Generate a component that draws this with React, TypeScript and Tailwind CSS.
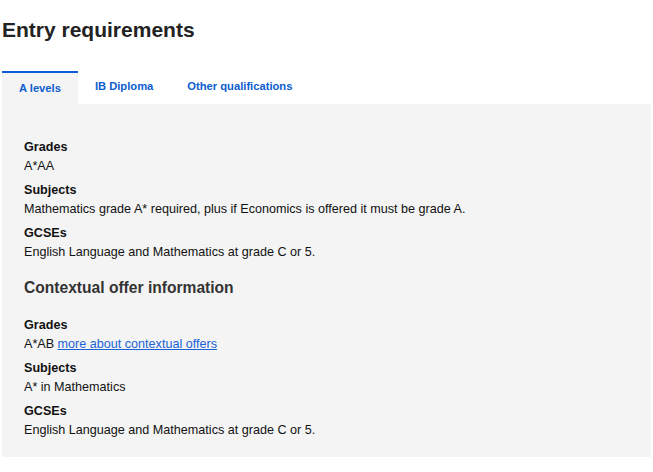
import React from "react";

function Item({ label, children, first }: { label: string; children: React.ReactNode; first?: boolean }) {
  return (
    <div className={first ? "" : "mt-[5px]"}>
      <div className="font-bold text-[#111]">{label}</div>
      <div className="text-[#111]">{children}</div>
    </div>
  );
}

export default function App() {
  return (
    <div className="bg-white w-[653px] h-[472px] pl-[2px] pr-[2px]" style={{ fontFamily: '"Liberation Sans", Arial, sans-serif' }}>
      <h1 className="pt-[16px] text-[21px] leading-[28px] font-bold text-[#222]">Entry requirements</h1>
      <div className="mt-[27px] flex text-[11.2px] leading-[16px] font-bold text-[#0b5dcf]">
        <div className="h-[33px] border-t-2 border-[#0b5dd6] bg-[#f4f4f4] px-[17px] pt-[7px]">A levels</div>
        <div className="h-[33px] px-[17px] pt-[7px]">IB Diploma</div>
        <div className="h-[33px] px-[17px] pt-[7px]">Other qualifications</div>
      </div>
      <div className="bg-[#f4f4f4] w-[649px] pl-[22px] pt-[34px] pb-[17px] text-[12.6px] leading-[19px]">
        <Item label="Grades" first>A*AA</Item>
        <Item label="Subjects">Mathematics grade A* required, plus if Economics is offered it must be grade A.</Item>
        <Item label="GCSEs">English Language and Mathematics at grade C or 5.</Item>
        <h2 className="mt-[15px] mb-[16.5px] text-[15.6px] leading-[22px] font-bold text-[#333]">Contextual offer information</h2>
        <Item label="Grades" first>
          A*AB{" "}
          <a href="#" className="text-[#1a62d6] underline">more about contextual offers</a>
        </Item>
        <Item label="Subjects">A* in Mathematics</Item>
        <Item label="GCSEs">English Language and Mathematics at grade C or 5.</Item>
      </div>
    </div>
  );
}
